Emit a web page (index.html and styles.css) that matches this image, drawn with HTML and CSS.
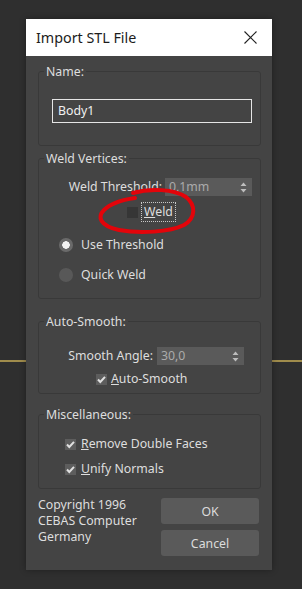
FILE: index.html
```html
<!DOCTYPE html>
<html lang="en">
<head>
    <meta charset="UTF-8">
    <title>Import STL File</title>
    <link rel="stylesheet" href="styles.css">
</head>
<body>
    <div class="dialog">
        <div class="titlebar">
            <span class="title">Import STL File</span>
            <svg class="close" width="13" height="13" viewBox="0 0 13 13">
                <path d="M0.5 0.5 L12.5 12.5 M12.5 0.5 L0.5 12.5" stroke="#222" stroke-width="1.1" fill="none"/>
            </svg>
        </div>

        <div class="content">
            <!-- Name -->
            <div class="group group-name">
                <div class="group-title">Name:</div>
                <div class="text-input">Body1</div>
            </div>

            <!-- Weld Vertices -->
            <div class="group group-weld">
                <div class="group-title">Weld Vertices:</div>
                <div class="spin-row threshold-row">
                    <span>Weld Threshold:</span>
                    <div class="spinner threshold-spinner">
                        <span>0,1mm</span>
                        <svg class="arrows" width="7" height="11" viewBox="0 0 7 11">
                            <path d="M3.5 0.5 L6.5 4 L0.5 4 Z M3.5 10.5 L6.5 7 L0.5 7 Z" fill="#bdbdbd"/>
                        </svg>
                    </div>
                </div>
                <div class="check-row weld-row">
                    <span class="checkbox"></span>
                    <span class="focus-label"><u>W</u>eld</span>
                </div>
                <div class="radio-row use-row">
                    <span class="radio selected"></span>
                    <span>Use Threshold</span>
                </div>
                <div class="radio-row quick-row">
                    <span class="radio"></span>
                    <span>Quick Weld</span>
                </div>
            </div>

            <!-- Auto-Smooth -->
            <div class="group group-smooth">
                <div class="group-title">Auto-Smooth:</div>
                <div class="spin-row angle-row">
                    <span>Smooth Angle:</span>
                    <div class="spinner angle-spinner">
                        <span>30,0</span>
                        <svg class="arrows" width="7" height="11" viewBox="0 0 7 11">
                            <path d="M3.5 0.5 L6.5 4 L0.5 4 Z M3.5 10.5 L6.5 7 L0.5 7 Z" fill="#bdbdbd"/>
                        </svg>
                    </div>
                </div>
                <div class="check-row smooth-row">
                    <span class="checkbox checked">
                        <svg width="11" height="11" viewBox="0 0 11 11"><path d="M2 5.5 L4.3 8 L9 2.8" stroke="#e0e0e0" stroke-width="2" fill="none"/></svg>
                    </span>
                    <span><u>A</u>uto-Smooth</span>
                </div>
            </div>

            <!-- Miscellaneous -->
            <div class="group group-misc">
                <div class="group-title">Miscellaneous:</div>
                <div class="check-row faces-row">
                    <span class="checkbox checked">
                        <svg width="11" height="11" viewBox="0 0 11 11"><path d="M2 5.5 L4.3 8 L9 2.8" stroke="#e0e0e0" stroke-width="2" fill="none"/></svg>
                    </span>
                    <span><u>R</u>emove Double Faces</span>
                </div>
                <div class="check-row normals-row">
                    <span class="checkbox checked">
                        <svg width="11" height="11" viewBox="0 0 11 11"><path d="M2 5.5 L4.3 8 L9 2.8" stroke="#e0e0e0" stroke-width="2" fill="none"/></svg>
                    </span>
                    <span><u>U</u>nify Normals</span>
                </div>
            </div>

            <div class="footer">
                <div class="copyright">Copyright 1996<br>CEBAS Computer<br>Germany</div>
                <div class="buttons">
                    <button class="btn">OK</button>
                    <button class="btn">Cancel</button>
                </div>
            </div>
        </div>
    </div>

    <!-- red marker drawn over the screenshot -->
    <svg class="annotation" width="302" height="589" viewBox="0 0 302 589">
        <path d="M133 193 C150 188 174 189 186 197 C196 205 196 218 184 225 C170 232 140 234 119 230 C100 226 97 217 104 210 C110 204 121 200 135 198"
              stroke="#e3040a" stroke-width="4" fill="none" stroke-linecap="round"/>
    </svg>
</body>
</html>
```

FILE: styles.css
```css
body {
    margin: 0;
    height: 589px;
    overflow: hidden;
    font-family: "Noto Sans", sans-serif;
    font-size: 12.3px;
    line-height: 16px;
    color: #dedede;
    background: #2f2f2f linear-gradient(to bottom, transparent 360px, #a08c4c 360px, #a08c4c 362px, transparent 362px);
}
.dialog {
    margin: 19px 0 0 26px;
    width: 246px;
    height: 551px;
    background-color: #444444;
    box-shadow: 0 0 6px rgba(0, 0, 0, 0.35);
}
.titlebar {
    height: 37px;
    background-color: #ffffff;
    display: flex;
    align-items: center;
    justify-content: space-between;
    padding: 0 15px 0 10px;
}
.title {
    font-size: 14.3px;
    color: #1c1c1c;
}
.close {
    display: block;
}
.content {
    padding: 0 11px 0 12px;
    display: flex;
    flex-direction: column;
}

/* group boxes */
.group {
    border: 1px solid #393939;
    border-radius: 3px;
}
.group-title {
    width: fit-content;
    margin: -8px 0 0 5px;
    padding: 0 2px;
    line-height: 16px;
    background-color: #444444;
}
.group-name {
    margin-top: 15px;
}
.group-weld {
    margin-top: 12px;
}
.group-smooth {
    margin-top: 22px;
}
.group-misc {
    margin-top: 20px;
}

.text-input {
    box-sizing: border-box;
    height: 24px;
    margin: 19px 8px 22px 13px;
    padding-left: 5px;
    border: 1px solid #e6e6e6;
    line-height: 22px;
    color: #f0f0f0;
}

/* spinner rows */
.spin-row {
    display: flex;
    justify-content: flex-end;
    align-items: center;
    height: 18px;
    gap: 3px;
}
.threshold-row {
    margin-top: 11px;
    padding-right: 8px;
}
.angle-row {
    margin-top: 17px;
    padding-right: 16px;
    gap: 4px;
}
.spinner {
    width: 87px;
    height: 18px;
    box-sizing: border-box;
    padding: 0 5px 0 4px;
    background-color: #5a5a5a;
    color: #ababab;
    display: flex;
    align-items: center;
    justify-content: space-between;
}
.arrows {
    display: block;
}

/* checkboxes */
.check-row {
    display: flex;
    align-items: center;
    height: 16px;
    gap: 5px;
}
.checkbox {
    width: 11px;
    height: 11px;
    background-color: #363636;
    display: flex;
}
.checkbox.checked {
    background-color: #5d5d5d;
}
.weld-row {
    height: 20px;
    margin-top: 6px;
    padding-left: 88px;
    gap: 4px;
}
.focus-label {
    padding: 1px 2px;
    line-height: 16px;
    outline: 1px dotted #c8c8c8;
}
.smooth-row {
    margin: 6px 0 6px 57px;
    gap: 4px;
}
.faces-row {
    margin: 13px 0 0 26px;
}
.normals-row {
    margin: 9px 0 11px 26px;
}

/* radios */
.radio-row {
    display: flex;
    align-items: center;
    height: 16px;
    gap: 8px;
    padding-left: 20px;
}
.use-row {
    margin-top: 15px;
}
.quick-row {
    margin: 14px 0 15px;
}
.radio {
    width: 14px;
    height: 14px;
    border-radius: 50%;
    background-color: #585858;
    box-sizing: border-box;
}
.radio.selected {
    background: radial-gradient(circle, #f4f4f4 0, #f4f4f4 3.5px, #6a6a6a 4px);
}

/* footer */
.footer {
    display: flex;
    justify-content: space-between;
}
.copyright {
    margin-top: 8px;
    line-height: 16px;
}
.buttons {
    margin: 9px 2px 0 0;
    display: flex;
    flex-direction: column;
    gap: 6px;
}
.btn {
    width: 98px;
    height: 26px;
    border: none;
    border-radius: 3px;
    background-color: #5a5a5a;
    color: #dcdcdc;
    font-family: "Noto Sans", sans-serif;
    font-size: 12.3px;
    padding: 0;
}

.annotation {
    position: absolute;
    top: 0;
    left: 0;
    pointer-events: none;
}
```
